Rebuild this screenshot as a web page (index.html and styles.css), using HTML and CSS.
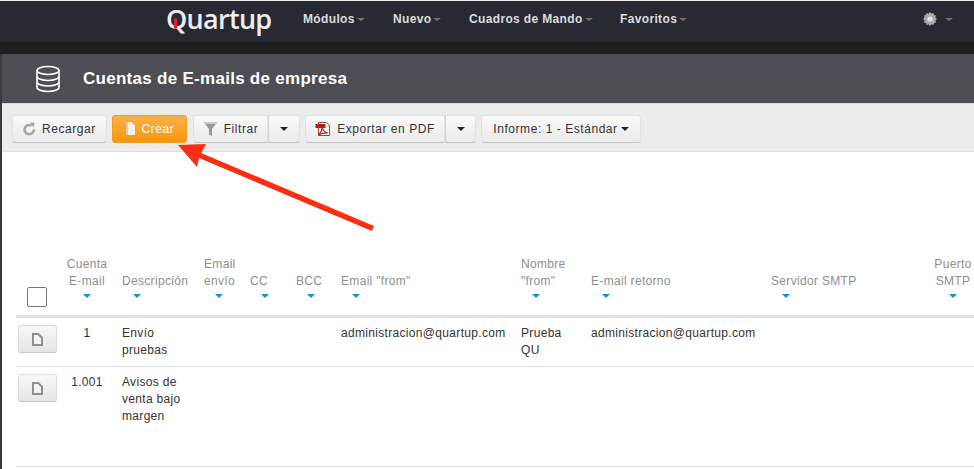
FILE: index.html
```html
<!DOCTYPE html>
<html lang="es">

<head>
  <meta charset="UTF-8">
  <title>Cuentas de E-mails de empresa</title>
  <link rel="stylesheet" href="styles.css">
</head>

<body>
  <div class="navbar">
    <div class="logo">Quartup<span class="logo-mark"></span></div>
    <a class="nav-item nav-modulos">Módulos<i class="nav-caret"></i></a>
    <a class="nav-item nav-nuevo">Nuevo<i class="nav-caret"></i></a>
    <a class="nav-item nav-cuadros">Cuadros de Mando<i class="nav-caret"></i></a>
    <a class="nav-item">Favoritos<i class="nav-caret"></i></a>
    <div class="nav-gear">
      <svg width="16" height="16" viewBox="0 0 16 16">
        <path fill="#a9a9a9" d="M8 1l1.4 1.6 2-.7.6 2 2 .6-.7 2L15 8l-1.6 1.4.7 2-2 .6-.6 2-2-.7L8 15l-1.4-1.6-2 .7-.6-2-2-.6.7-2L1 8l1.6-1.4-.7-2 2-.6.6-2 2 .7z"/>
        <circle cx="8" cy="8" r="2.6" fill="#e2e2e2"/>
      </svg>
      <i class="nav-caret"></i>
    </div>
  </div>
  <div class="navbar-strip"></div>

  <div class="page">
    <div class="title-bar">
      <svg class="title-icon" width="26" height="28" viewBox="0 0 26 28" fill="none" stroke="#fff" stroke-width="1.6">
        <ellipse cx="13" cy="5.5" rx="11" ry="4"/>
        <path d="M2 5.5v17c0 2.2 5 4 11 4s11-1.800 11-4v-17"/>
        <path d="M2 11.500c0 2.200 5 4 11 4s11-1.800 11-4"/>
        <path d="M2 17c0 2.200 5 4 11 4s11-1.800 11-4"/>
      </svg>
      <h1>Cuentas de E-mails de empresa</h1>
    </div>

    <div class="toolbar">
      <button class="btn btn-recargar">
        <svg width="13" height="14" viewBox="0 0 13 14" fill="none">
          <path d="M10.800 7.500a4.600 4.600 0 1 1-2.200-3.800" stroke="#a3a3a3" stroke-width="2.500"/>
          <path d="M7 .2l4.600.6-1 4.400z" fill="#a3a3a3"/>
        </svg>
        Recargar
      </button>
      <button class="btn btn-orange">
        <svg width="11" height="13" viewBox="0 0 11 13">
          <path d="M1 0h5.500L10 3.500V13H1z" fill="#f8f1e6"/>
          <path d="M1 0h2v13H1z" fill="#d8c8b0"/>
        </svg>
        Crear
      </button>
      <div class="btn-group btn-group-filtrar">
        <button class="btn btn-filtrar">
          <svg width="15" height="16" viewBox="0 0 15 16">
            <path d="M.5 1h14L9 8v7l-3-1.500V8z" fill="#9a9a9a"/>
            <path d="M.5 1h14l-1.500 2H2z" fill="#c9c9c9"/>
          </svg>
          Filtrar
        </button>
        <button class="btn btn-split"><i class="caret"></i></button>
      </div>
      <div class="btn-group">
        <button class="btn btn-exportar">
          <svg width="16" height="16" viewBox="0 0 16 16">
            <path d="M3.500 1.500h8l3 3v10h-11z" fill="#fff" stroke="#a8423c"/>
            <rect x="0.500" y="3" width="10" height="4" fill="#b3201c"/>
            <path d="M3 14c2-1.500 4-5 4.200-8 .4 3 2.500 5.500 6 6-3.500-.2-7 .5-10.200 2z" fill="none" stroke="#c5211d" stroke-width="1.200"/>
          </svg>
          Exportar en PDF
        </button>
        <button class="btn btn-split btn-split-pdf"><i class="caret"></i></button>
      </div>
      <button class="btn btn-informe">Informe: 1 - Estándar<i class="caret"></i></button>
    </div>

    <div class="list">
      <table>
        <colgroup>
          <col class="col-check">
          <col class="col-cuenta">
          <col class="col-desc">
          <col class="col-envio">
          <col class="col-cc">
          <col class="col-bcc">
          <col class="col-from">
          <col class="col-nombre">
          <col class="col-retorno">
          <col class="col-smtp">
          <col class="col-puerto">
        </colgroup>
        <thead>
          <tr>
            <th><span class="checkbox"></span></th>
            <th class="center">Cuenta<br>E-mail<i class="sort"></i></th>
            <th>Descripción<i class="sort"></i></th>
            <th>Email<br>envío<i class="sort"></i></th>
            <th>CC<i class="sort"></i></th>
            <th>BCC<i class="sort"></i></th>
            <th>Email "from"<i class="sort"></i></th>
            <th>Nombre<br>"from"<i class="sort"></i></th>
            <th>E-mail retorno<i class="sort"></i></th>
            <th>Servidor SMTP<i class="sort"></i></th>
            <th class="center">Puerto<br>SMTP<i class="sort"></i></th>
          </tr>
        </thead>
        <tbody>
          <tr>
            <td><button class="row-btn"><svg width="11" height="13" viewBox="0 0 11 13"><path d="M1 1h5.300L10 4.700V12H1z" fill="#f4f4f4" stroke="#8f8f8f" stroke-width="2"/></svg></button></td>
            <td class="center">1</td>
            <td>Envío pruebas</td>
            <td></td>
            <td></td>
            <td></td>
            <td>administracion@quartup.com</td>
            <td>Prueba QU</td>
            <td>administracion@quartup.com</td>
            <td></td>
            <td></td>
          </tr>
          <tr class="row-tall">
            <td><button class="row-btn"><svg width="11" height="13" viewBox="0 0 11 13"><path d="M1 1h5.300L10 4.700V12H1z" fill="#f4f4f4" stroke="#8f8f8f" stroke-width="2"/></svg></button></td>
            <td class="center">1.001</td>
            <td>Avisos de venta bajo margen</td>
            <td></td>
            <td></td>
            <td></td>
            <td></td>
            <td></td>
            <td></td>
            <td></td>
            <td></td>
          </tr>
        </tbody>
      </table>
    </div>
  </div>

  <svg class="arrow" width="974" height="469" viewBox="0 0 974 469">
    <path fill="#fb2d12" d="M178 145L206 144 201 153 374 226 372 231 199 158 197 167z"/>
  </svg>
</body>

</html>
```

FILE: styles.css
```css
html, body {
  margin: 0;
  height: 469px;
  overflow: hidden;
  background: #fff;
  font-family: "Liberation Sans", Arial, sans-serif;
}

.navbar {
  height: 41px;
  border-top: 1px solid #eee;
  background: #272a33;
  display: flex;
  align-items: center;
  padding-left: 166px;
  position: relative;
}
.navbar-strip {
  height: 12px;
  background: #1e1f20;
}

.logo {
  position: relative;
  width: 137px;
  font-family: "Open Sans", sans-serif;
  font-size: 27px;
  font-weight: 600;
  letter-spacing: -.7px;
  line-height: 30px;
  color: #eee;
  margin-top: -6px;
}
.logo-mark {
  position: absolute;
  left: 8px;
  top: 14px;
  width: 3px;
  height: 11px;
  border-radius: 2px;
  background: #e0202c;
}

.nav-item {
  font-size: 12px;
  font-weight: bold;
  letter-spacing: .35px;
  color: #ddd;
  margin-top: -5px;
}
.nav-modulos { width: 90px; }
.nav-nuevo { width: 76px; }
.nav-cuadros { width: 151px; }
.nav-caret {
  display: inline-block;
  margin-left: 2px;
  vertical-align: 2px;
  border-top: 3px solid #777;
  border-left: 4px solid transparent;
  border-right: 4px solid transparent;
}
.nav-gear {
  margin-left: auto;
  margin-right: 21px;
  margin-top: -5px;
  display: flex;
  align-items: center;
  gap: 5px;
}

.page {
  border-left: 2px solid #3a3b3f;
  height: 415px;
}

.title-bar {
  height: 49px;
  background: #4d4e53;
  display: flex;
  align-items: center;
  padding-left: 33px;
}
.title-icon {
  margin-right: 22px;
}
h1 {
  margin: 0;
  font-size: 17px;
  font-weight: bold;
  letter-spacing: .28px;
  color: #fff;
}

.toolbar {
  height: 49px;
  box-sizing: border-box;
  background: #ececec;
  border-top: 1px solid #d8d8d8;
  border-bottom: 1px solid #dedede;
  display: flex;
  align-items: center;
  gap: 5px;
  padding: 2px 0 0 10px;
}

.btn {
  height: 28px;
  padding: 0;
  display: flex;
  align-items: center;
  justify-content: center;
  gap: 6px;
  font-family: inherit;
  font-size: 12px;
  letter-spacing: .55px;
  color: #333;
  border: 1px solid #e2e2e2;
  border-bottom-color: #c4c4c4;
  border-radius: 3px;
  background: linear-gradient(#fafafa, #eaeaea);
}
.btn-recargar { width: 95px; }
.btn-orange {
  width: 75px;
  color: #fff;
  border-color: #f09a1f;
  background: linear-gradient(#fbb14a, #f7960e);
}
.btn-group {
  display: flex;
}
.btn-group-filtrar {
  margin-left: 1px;
}
.btn-group .btn:first-child {
  border-radius: 3px 0 0 3px;
}
.btn-filtrar { width: 75px; }
.btn-exportar { width: 140px; }
.btn-split {
  width: 32px;
  border-left-color: #d4d4d4;
  border-radius: 0 3px 3px 0;
}
.btn-split-pdf { width: 31px; }
.btn-informe {
  width: 160px;
  gap: 3px;
}
.caret {
  border-top: 4px solid #222;
  border-left: 4px solid transparent;
  border-right: 4px solid transparent;
}

.list {
  padding: 104px 0 0 14px;
}
table {
  width: 967px;
  table-layout: fixed;
  border-collapse: collapse;
  font-size: 12px;
  letter-spacing: .32px;
  line-height: 17px;
}
.col-check { width: 44px; }
.col-cuenta { width: 54px; }
.col-desc { width: 82px; }
.col-envio { width: 46px; }
.col-cc { width: 46px; }
.col-bcc { width: 45px; }
.col-from { width: 180px; }
.col-nombre { width: 70px; }
.col-retorno { width: 180px; }
.col-smtp { width: 160px; }
.col-puerto { width: 60px; }

th {
  padding: 0 8px 17px;
  border-bottom: 3px solid #e2e2e2;
  text-align: left;
  vertical-align: bottom;
  font-weight: normal;
  color: #8e8e8e;
}
td {
  padding: 7px 8px;
  border-bottom: 1px solid #e2e2e2;
  vertical-align: top;
  color: #333;
}
th.center, td.center {
  padding-left: 0;
  padding-right: 0;
  text-align: center;
}
.row-tall td {
  height: 85px;
}

.sort {
  display: block;
  width: 0;
  margin: 4px 0 0 11px;
  border-top: 4px solid #1b8fd6;
  border-left: 4px solid transparent;
  border-right: 4px solid transparent;
}
.center .sort {
  margin: 4px auto 0;
}
.checkbox {
  display: block;
  width: 18px;
  height: 18px;
  margin: 0 0 -9px 3px;
  background: #fff;
  border: 1px solid #777;
  border-radius: 2px;
}
.row-btn {
  width: 39px;
  height: 28px;
  margin: 0 0 0 -6px;
  padding: 0;
  display: flex;
  align-items: center;
  justify-content: center;
  border: 1px solid #dcdcdc;
  border-bottom-color: #c8c8c8;
  border-radius: 3px;
  background: linear-gradient(#f7f7f7, #e6e6e6);
}

.arrow {
  position: absolute;
  left: 0;
  top: 0;
  pointer-events: none;
}
```
